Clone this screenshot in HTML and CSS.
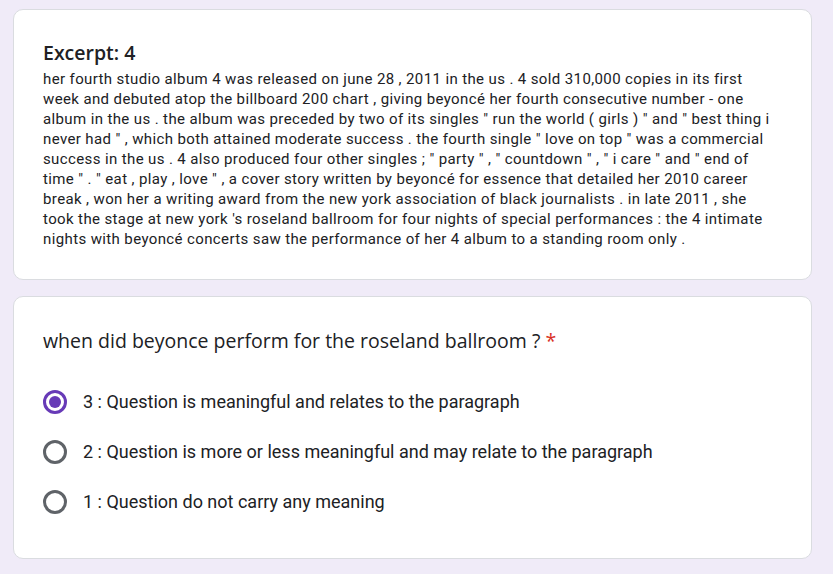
FILE: index.html
```html
<!DOCTYPE html>
<html>
<head>
<meta charset="utf-8">
<link rel="stylesheet" href="styles.css">
</head>
<body>
<main class="page">
  <section class="card excerpt">
    <h2 class="excerpt-title">Excerpt: 4</h2>
    <p class="excerpt-text">her fourth studio album 4 was released on june 28 , 2011 in the us . 4 sold 310,000 copies in its first week and debuted atop the billboard 200 chart , giving beyoncé her fourth consecutive number - one album in the us . the album was preceded by two of its singles " run the world ( girls ) " and " best thing i never had " , which both attained moderate success . the fourth single " love on top " was a commercial success in the us . 4 also produced four other singles ; " party " , " countdown " , " i care " and " end of time " . " eat , play , love " , a cover story written by beyoncé for essence that detailed her 2010 career break , won her a writing award from the new york association of black journalists . in late 2011 , she took the stage at new york 's roseland ballroom for four nights of special performances : the 4 intimate nights with beyoncé concerts saw the performance of her 4 album to a standing room only .</p>
  </section>
  <section class="card question">
    <h3 class="question-title">when did beyonce perform for the roseland ballroom ? <span class="required">*</span></h3>
    <div class="options">
      <label class="option"><span class="radio checked"></span><span class="option-label">3 : Question is meaningful and relates to the paragraph</span></label>
      <label class="option"><span class="radio"></span><span class="option-label">2 : Question is more or less meaningful and may relate to the paragraph</span></label>
      <label class="option"><span class="radio"></span><span class="option-label">1 : Question do not carry any meaning</span></label>
    </div>
  </section>
  <section class="card next"></section>
</main>
</body>
</html>
```

FILE: styles.css
```css
html, body {
  margin: 0;
  padding: 0;
  background: #f0ebf8;
}
body {
  font-family: Roboto, "Liberation Sans", Arial, sans-serif;
  color: #202124;
}
.page {
  display: flex;
  flex-direction: column;
  gap: 16px;
  padding: 9px 21px 0 13px;
  height: 574px;
  box-sizing: border-box;
  overflow: hidden;
}
.card {
  background: #fff;
  border: 1px solid #dadce0;
  border-radius: 10px;
  flex-shrink: 0;
}
.excerpt {
  padding: 31px 38px 30px 29px;
}
.excerpt-title {
  margin: 0 0 4px;
  font-family: "Open Sans", sans-serif;
  font-weight: 600;
  font-size: 19.5px;
  line-height: 24px;
  color: #202124;
}
.excerpt-text {
  margin: 0;
  font-size: 15px;
  letter-spacing: 0.38px;
  line-height: 20px;
  color: #202124;
}
.question {
  padding: 31px 24px 44px 29px;
}
.question-title {
  margin: 0 0 36px;
  font-family: "Open Sans", sans-serif;
  font-weight: 400;
  font-size: 19.5px;
  line-height: 26px;
  color: #202124;
}
.required {
  color: #d93025;
}
.options {
  display: flex;
  flex-direction: column;
  gap: 26px;
}
.option {
  display: flex;
  align-items: center;
  gap: 16px;
  height: 24px;
}
.radio {
  width: 24px;
  height: 24px;
  box-sizing: border-box;
  border: 3px solid #5f6368;
  border-radius: 50%;
  display: flex;
  align-items: center;
  justify-content: center;
  flex-shrink: 0;
}
.radio.checked {
  border-color: #673ab7;
}
.radio.checked::after {
  content: "";
  width: 12px;
  height: 12px;
  border-radius: 50%;
  background: #673ab7;
}
.option-label {
  font-size: 18px;
  line-height: 24px;
  color: #202124;
}
.next {
  height: 40px;
}
```
